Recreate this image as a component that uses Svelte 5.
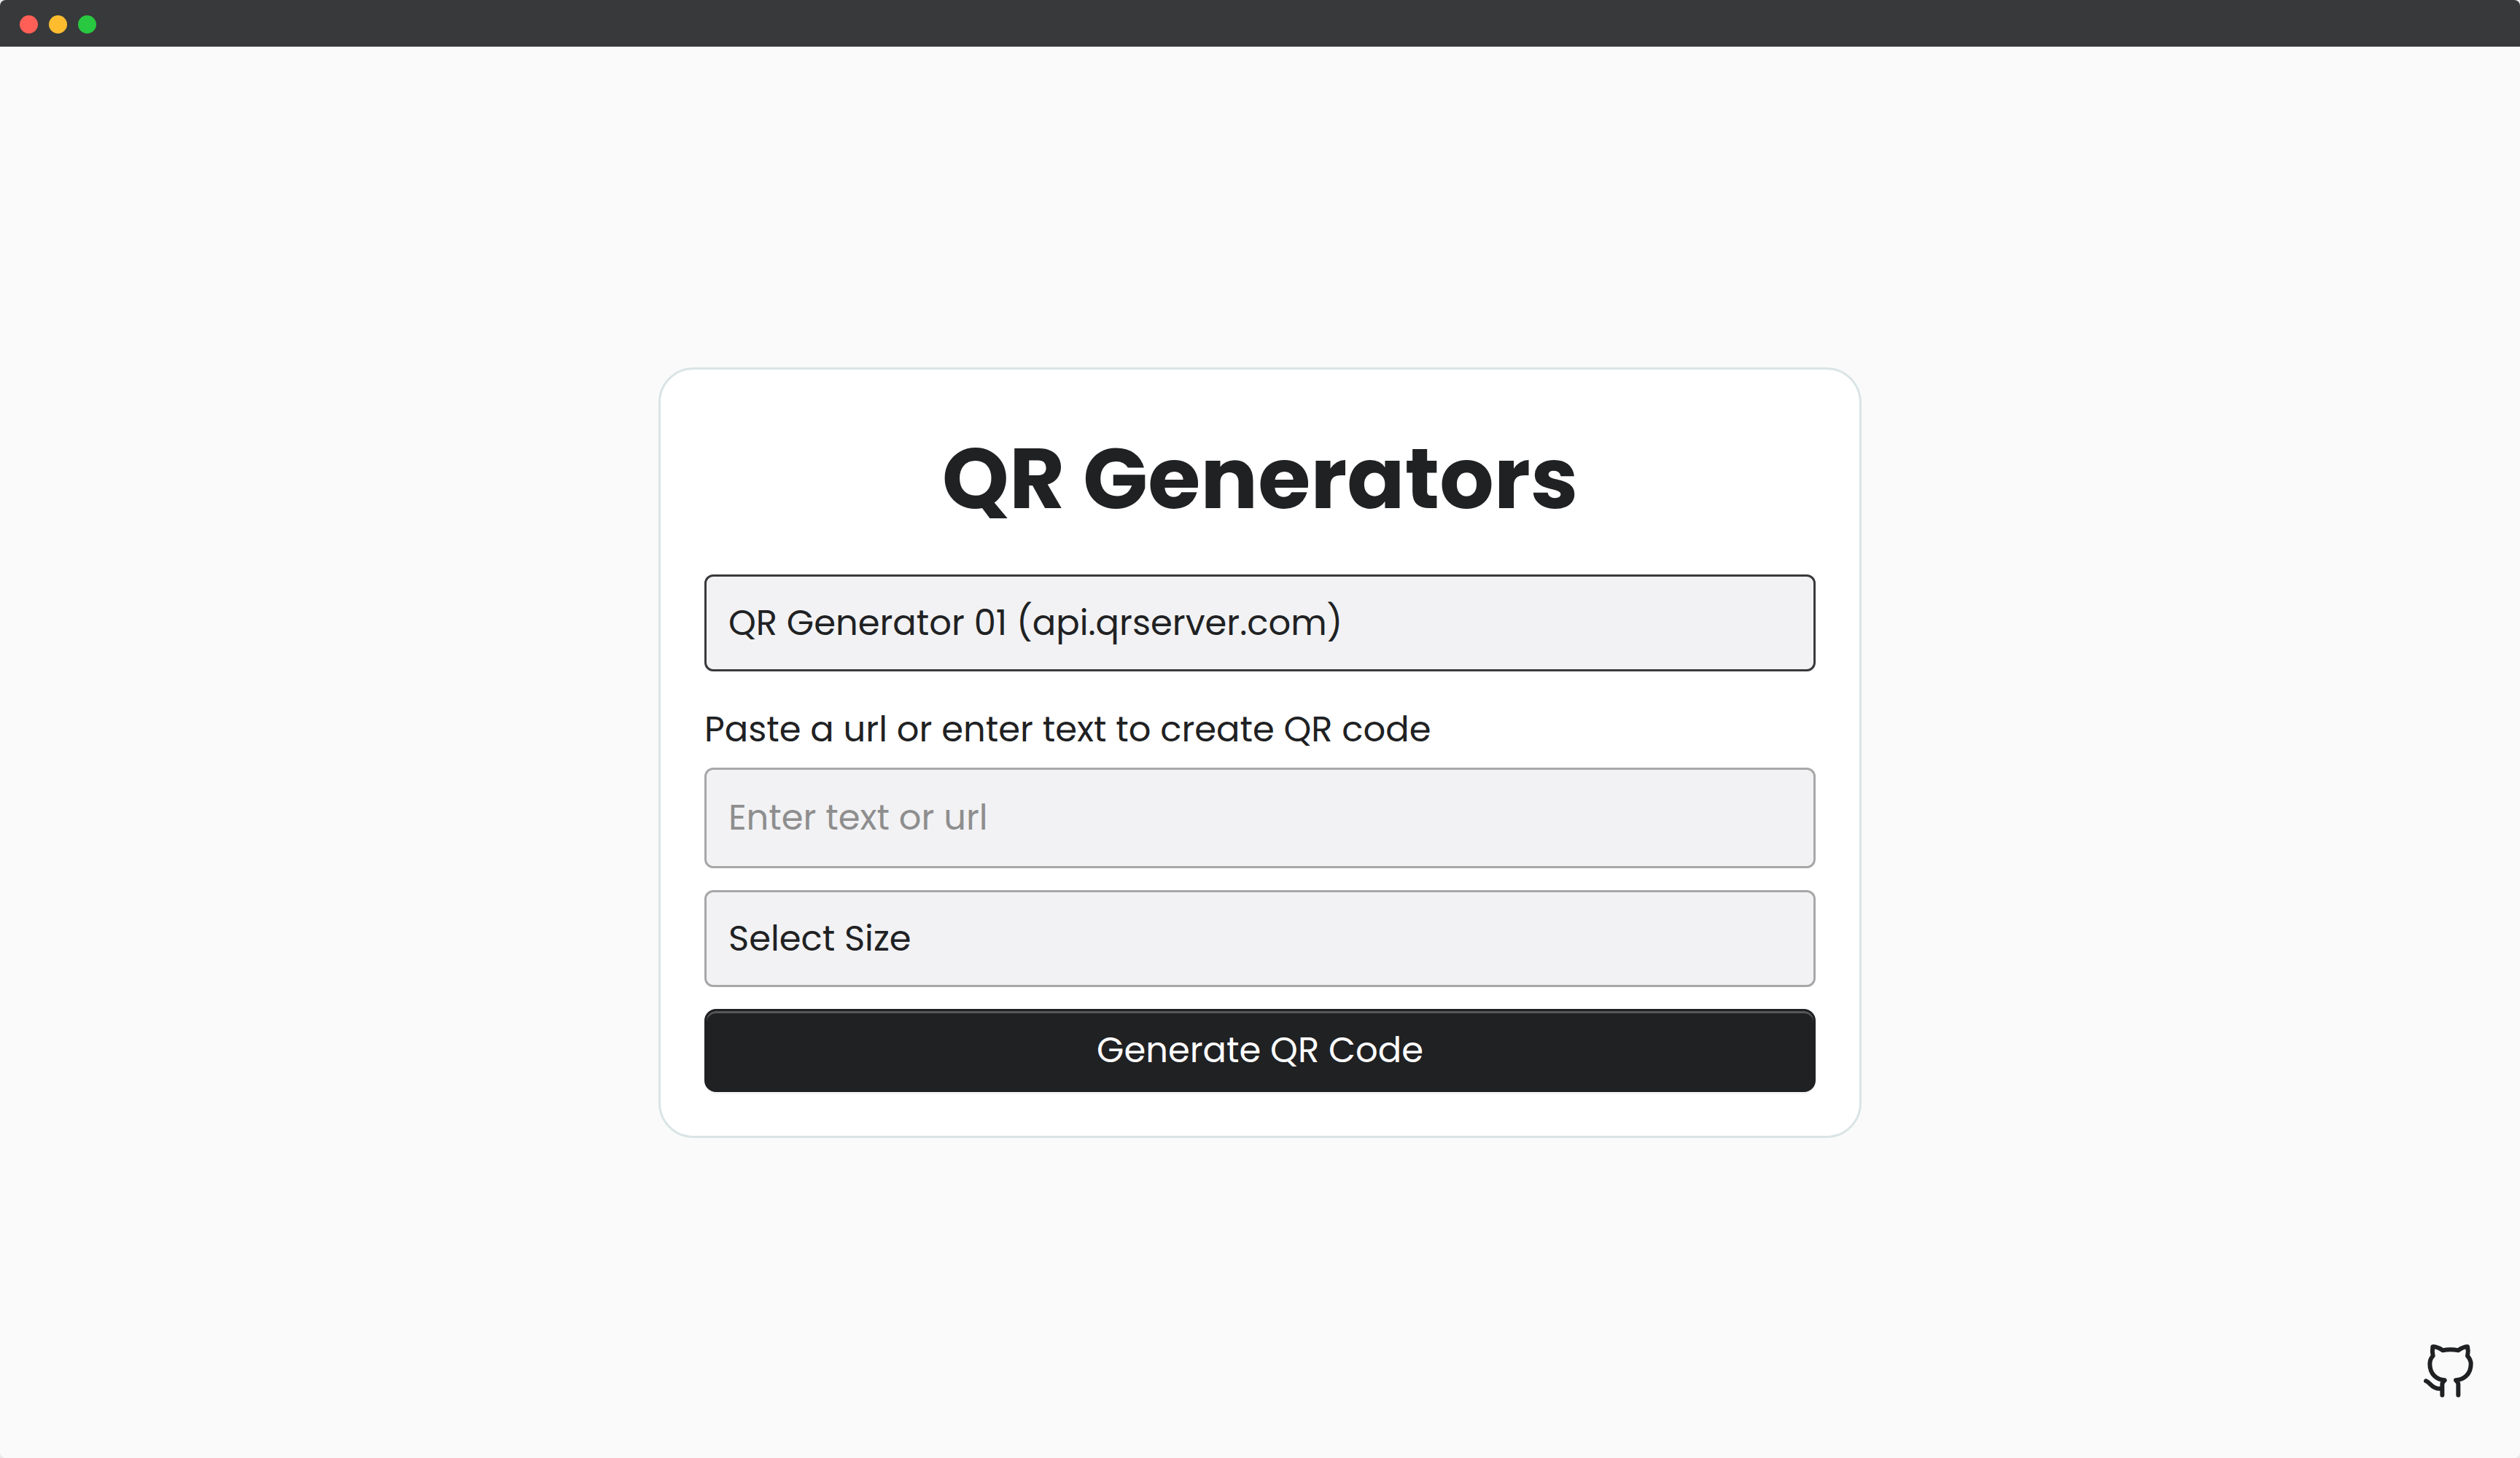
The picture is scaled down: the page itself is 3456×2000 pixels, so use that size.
<script>
  let generator = $state('qrserver');
  let text = $state('');
  let size = $state('');
</script>

<div class="window">
  <header class="titlebar">
    <span class="light close"></span>
    <span class="light minimize"></span>
    <span class="light zoom"></span>
  </header>

  <main>
    <form class="card" onsubmit={(e) => e.preventDefault()}>
      <h1>QR Generators</h1>

      <select class="field active" aria-label="QR generator" bind:value={generator}>
        <option value="qrserver">QR Generator 01 (api.qrserver.com)</option>
      </select>

      <label for="content">Paste a url or enter text to create QR code</label>
      <input class="field" id="content" type="text" placeholder="Enter text or url" bind:value={text} />

      <select class="field" aria-label="Size" bind:value={size}>
        <option value="">Select Size</option>
      </select>

      <button type="submit">Generate QR Code</button>
    </form>
  </main>

  <a class="github" href="https://github.com" aria-label="GitHub">
    <svg viewBox="200 130 210 225" fill="none" stroke="currentColor" stroke-width="18" stroke-linecap="round" stroke-linejoin="round">
      <path d="M279 342V298Q279 289 289 281C256 279 228 256 228 214C228 200 232 190 241 181C238 168 238 155 240 143C254 143 268 149 281 158Q313 151 345 158C358 149 370 143 383 143C386 155 386 168 383 181C391 190 397 200 397 214C397 256 368 279 335 281Q345 289 345 298V342" />
      <path d="M212 284C232 292 236 318 276 316" />
    </svg>
  </a>
</div>

<style>
  :global(body) {
    margin: 0;
    background: #e9e9e9;
  }

  .window {
    position: relative;
    display: flex;
    flex-direction: column;
    min-height: 100vh;
    border-radius: 8px;
    overflow: hidden;
    background: #fafafa;
    color: #202123;
    font-family: Poppins, Inter, sans-serif;
    font-size: 48px;
    line-height: 72px;
  }

  .titlebar {
    display: flex;
    gap: 15px;
    box-sizing: border-box;
    height: 64px;
    padding: 21px 27px 0;
    background: #38393b;
  }

  .light {
    width: 25px;
    height: 25px;
    border-radius: 50%;
  }

  .close { background: #ff5f57; }
  .minimize { background: #febc2e; }
  .zoom { background: #28c840; }

  main {
    flex: 1;
    display: flex;
    align-items: center;
    justify-content: center;
    padding-top: 1px;
  }

  .card {
    display: flex;
    flex-direction: column;
    box-sizing: border-box;
    width: 100%;
    max-width: 1650px;
    padding: 60px;
    border: 3px solid #dae4e5;
    border-radius: 48px;
    background: #fff;
  }

  h1 {
    margin: 0 0 43px;
    font-size: 117px;
    font-weight: 700;
    line-height: 178px;
    text-align: center;
  }

  label {
    margin: 44px 0 16px;
  }

  .field {
    appearance: none;
    box-sizing: border-box;
    width: 100%;
    margin: 0;
    padding: 27px 30px;
    border: 3px solid #a8a8a9;
    border-radius: 12px;
    outline: none;
    background: #f2f2f4;
    color: inherit;
    font: inherit;
  }

  select.field {
    height: 133px;
  }

  input.field {
    height: 138px;
    margin-bottom: 30px;
  }

  .field.active {
    border-color: #3a3a3c;
  }

  .field::placeholder {
    color: #8e8e8e;
    opacity: 1;
  }

  button {
    margin: 30px 0 0;
    padding: 18px 30px;
    border: 3px solid #202123;
    border-radius: 16px;
    background: #202123;
    box-shadow: inset 0 3px 0 #555758, 0 3px 0 #f6f6f7;
    color: #fff;
    font: inherit;
  }

  .github {
    position: absolute;
    right: 63px;
    bottom: 82px;
    width: 70px;
    height: 75px;
    color: #202123;
  }

  .github svg {
    display: block;
    width: 100%;
    height: 100%;
  }
</style>
